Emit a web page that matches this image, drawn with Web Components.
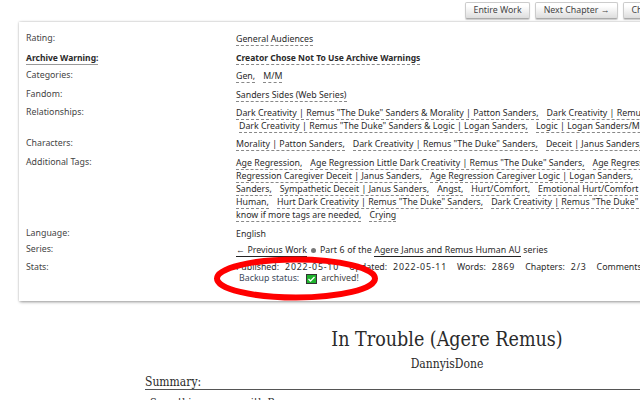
<!DOCTYPE html>
<html><head><meta charset="utf-8"><title>In Trouble</title>
<style>
html,body{margin:0;padding:0;background:#fff;overflow:hidden;width:640px;height:400px}
body{font-family:"Noto Sans",sans-serif;color:#2a2a2a}
</style></head><body>
<work-page>
<nav-bar slot="nav"><nav-btn>Entire Work</nav-btn><nav-btn>Next Chapter →</nav-btn><nav-btn>Chapter Index</nav-btn></nav-bar>
<meta-card slot="meta">
 <meta-row label="Rating:" style="--h:19px"><t-l><x-t>General Audiences</x-t></t-l></meta-row>
 <meta-row label="Archive Warning:" strong style="--h:18px"><t-l><x-t><b>Creator Chose Not To Use Archive Warnings</b></x-t></t-l></meta-row>
 <meta-row label="Categories:" style="--h:19px"><t-l><x-t>Gen,</x-t><x-t>M/M</x-t></t-l></meta-row>
 <meta-row label="Fandom:" style="--h:18px"><t-l><x-t>Sanders Sides (Web Series)</x-t></t-l></meta-row>
 <meta-row label="Relationships:" style="--h:31px">
  <t-l><x-t>Dark Creativity | Remus "The Duke" Sanders &amp; Morality | Patton Sanders,</x-t><x-t>Dark Creativity | Remus "The Duke" Sanders</x-t></t-l>
  <t-l style="--i:3px"><x-t>Dark Creativity | Remus "The Duke" Sanders &amp; Logic | Logan Sanders,</x-t><x-t>Logic | Logan Sanders/Morality</x-t></t-l>
 </meta-row>
 <meta-row label="Characters:" style="--h:19px"><t-l><x-t>Morality | Patton Sanders,</x-t><x-t>Dark Creativity | Remus "The Duke" Sanders,</x-t><x-t>Deceit | Janus Sanders,</x-t></t-l></meta-row>
 <meta-row label="Additional Tags:" style="--h:71px">
  <t-l><x-t>Age Regression,</x-t><x-t>Age Regression Little Dark Creativity | Remus "The Duke" Sanders,</x-t><x-t>Age Regression</x-t></t-l>
  <t-l><x-t>Regression Caregiver Deceit | Janus Sanders,</x-t><x-t>Age Regression Caregiver Logic | Logan Sanders,</x-t></t-l>
  <t-l><x-t>Sanders,</x-t><x-t>Sympathetic Deceit | Janus Sanders,</x-t><x-t>Angst,</x-t><x-t>Hurt/Comfort,</x-t><x-t>Emotional Hurt/Comfort</x-t></t-l>
  <t-l><x-t>Human,</x-t><x-t>Hurt Dark Creativity | Remus "The Duke" Sanders,</x-t><x-t>Dark Creativity | Remus "The Duke" Sanders</x-t></t-l>
  <t-l><x-t>know if more tags are needed,</x-t><x-t>Crying</x-t></t-l>
 </meta-row>
 <meta-row label="Language:" style="--h:16px"><t-l>English</t-l></meta-row>
 <meta-row label="Series:" style="--h:18px"><t-l style="word-spacing:.3px"><x-t solid>← Previous Work</x-t><span style="display:inline-block;width:5px;height:5px;border-radius:50%;background:#777;margin:0 4px 0 4px"></span>Part 6 of the <x-t solid>Agere Janus and Remus Human AU</x-t> series</t-l></meta-row>
 <meta-row label="Stats:" style="--h:23px">
  <stat-line><span>Published:</span><span class="d">2022-05-10</span><span class="g">Updated:</span><span class="d">2022-05-11</span><span class="g">Words:</span><span class="d">2869</span><span class="g">Chapters:</span><span class="d">2/3</span><span class="g">Comments:</span><span class="d">5</span></stat-line>
  <backup-line></backup-line>
 </meta-row>
 <red-ring slot="over"></red-ring>
</meta-card>
<work-head slot="head" title-text="In Trouble (Agere Remus)" author="DannyisDone"></work-head>
</work-page>
<script>
function def(name,css,html,init){
  customElements.define(name,class extends HTMLElement{
    connectedCallback(){
      if(this.shadowRoot)return;
      const r=this.attachShadow({mode:'open'});
      r.innerHTML='<style>'+css+'</style>'+(typeof html==='function'?html(this):html);
    }
  });
}
def('work-page',':host{display:block;width:800px}','<slot name="nav"></slot><slot name="meta"></slot><slot name="head"></slot>');
def('nav-bar',':host{display:flex;gap:5px;margin-left:465px;height:22px;align-items:flex-start;padding-top:2px;box-sizing:border-box}','<slot></slot>');
def('nav-btn',':host{display:block;box-sizing:border-box;height:17px;line-height:15px;padding:0 7.5px;font-size:8.8px;color:#444;white-space:nowrap;border:1px solid #ccc;border-bottom-color:#aaa;border-radius:2px;background:linear-gradient(#fff 20%,#ddd);box-shadow:0 1px 1px #ccc}','<slot></slot>');
def('meta-card',':host{display:block;position:relative;box-sizing:border-box;margin-left:19px;height:279px;padding:10px 0 0 7px;background:#fff;box-shadow:1px 1px 3px #999,0 0 2px #ccc}','<slot></slot><slot name="over"></slot>');
def('meta-row',':host{display:grid;grid-template-columns:210px 1fr;height:var(--h);font-size:8.8px;line-height:13px;white-space:nowrap}.l{color:#444;line-height:13px;align-self:start}.l.s{font-weight:bold;font-size:8.5px;color:#2a2a2a;border-bottom:1px solid #999;justify-self:start}.v{padding-top:1px}',
  e=>'<div class="l'+(e.hasAttribute('strong')?' s':'')+'">'+e.getAttribute('label')+'</div><div class="v"><slot></slot></div>');
def('t-l',':host{display:block;height:13px;line-height:12px;padding-left:var(--i,0);white-space:nowrap}','<slot></slot>');
def('x-t',':host{display:inline-block;line-height:12px;border-bottom:1px dashed #888;margin-right:8px}:host([solid]){border-bottom:1px solid #222;margin-right:0}::slotted(b){font-size:8.5px}','<slot></slot>');
def('stat-line',':host{display:block;height:11px;line-height:11px;white-space:nowrap}::slotted(span){margin-right:6px}::slotted(.g){margin-left:4px}::slotted(.d){letter-spacing:.8px}','<slot></slot>');
def('backup-line',':host{display:flex;align-items:center;gap:7px;height:11px;padding-left:3px;color:#3d4a5c;white-space:nowrap}svg{display:block;margin-right:-3px}.a{color:#444}',
 '<span>Backup status:</span><svg width="11" height="10" viewBox="0 0 11 10"><rect x=".5" y=".5" width="10" height="9" fill="#1fb32e" stroke="#333"/><path d="M2.5 5l2 2 4-4" fill="none" stroke="#fff" stroke-width="1.3"/></svg><span class="a">archived!</span>');
def('red-ring',':host{position:absolute;left:193px;top:234px;display:block;width:170px;height:46px;pointer-events:none}svg{display:block}',
 '<svg width="170" height="46" viewBox="0 0 170 46"><ellipse cx="84" cy="22.5" rx="79" ry="19" fill="none" stroke="#f00" stroke-width="6"/></svg>');
def('work-head',':host{display:block;width:640px;font-family:"DejaVu Serif Condensed","DejaVu Serif",serif;color:#2a2a2a}h2{margin:27px 0 0 254px;width:386px;text-align:center;font-weight:normal;font-size:19.5px;line-height:24px}.a{margin:5px 0 0 254px;width:386px;text-align:center;font-size:12px;line-height:14px}.s{margin:5px 0 0 145px;border-bottom:1px solid #555;font-size:12px;line-height:13px;height:13px}.s span{display:block}.b{margin:6px 0 0 150px;font-size:11px;line-height:13px;white-space:nowrap}',
 e=>'<h2>'+e.getAttribute('title-text')+'</h2><div class="a">'+e.getAttribute('author')+'</div><div class="s"><span>Summary:</span></div><div class="b">Something wrong with Remus</div>');
</script>
</body></html>
